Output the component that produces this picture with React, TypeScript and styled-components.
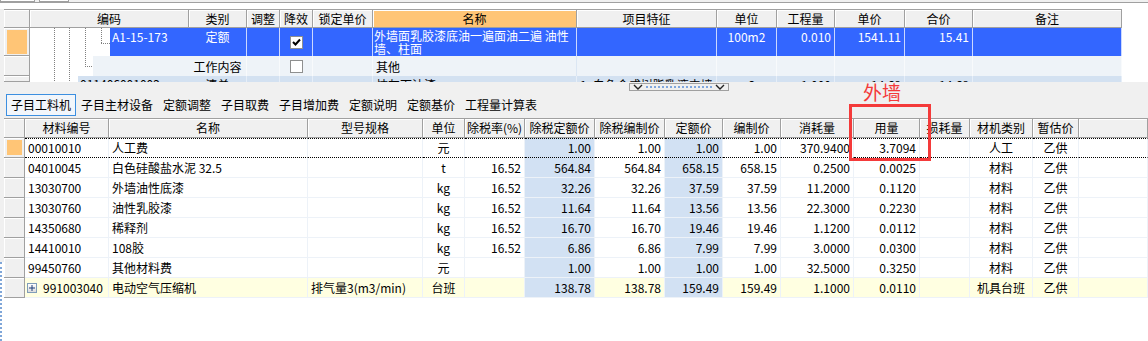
import React from 'react'
import styled, { createGlobalStyle } from 'styled-components'

const FONT = `"Noto Sans CJK SC", "Noto Sans", sans-serif`

const GlobalStyle = createGlobalStyle`
  html, body { margin: 0; padding: 0; background: #fff; }
  body { font-family: ${FONT}; font-size: 12px; color: #000; }
`

type Align = 'left' | 'center' | 'right'
const justify = (a?: Align) => (a === 'right' ? 'flex-end' : a === 'center' ? 'center' : 'flex-start')

// 上表列宽: 行头 编码 类别 调整 降效 锁定单价 名称 项目特征 单位 工程量 单价 合价 备注
const topCols = '26px 159px 58px 33px 33px 60px 204px 140px 60px 58px 70px 68px 149px'
// 下表列宽
const bottomCols = '21px 84px 199px 115px 42px 60px 70px 70px 58px 58px 73px 66px 50px 63px 46px 1fr'

const SEL = '#3366ff'
const ORANGE = '#ffc576'
const LIGHT_BLUE = '#d2e1f3'
const YELLOW = '#ffffe1'

const Screen = styled.div`
  position: relative;
  width: 1148px;
  height: 341px;
  overflow: hidden;
  display: flex;
  flex-direction: column;
  background: #f0f0f0;
`

const TopStrip = styled.div`
  height: 3px;
  box-sizing: border-box;
  border-bottom: 1px solid #a0a0a0;
  display: flex;
  gap: 4px;
`

const StripButton = styled.div<{ $w: number }>`
  width: ${p => p.$w}px;
  height: 2px;
  box-sizing: border-box;
  background: #fff;
  border: 1px solid #a0a0a0;
  border-top: none;
`

const TopPanel = styled.div`
  height: 79px;
  box-sizing: border-box;
  padding-top: 6px;
  background: #fff;
  display: flex;
  overflow: hidden;
`

const Gutter = styled.div`
  width: 4px;
  flex: none;
  background: #f0f0f0;
`

const TopGrid = styled.div`
  width: 1118px;
  border-top: 1px solid #a0a0a0;
  display: flex;
  flex-direction: column;
`

const TopRow = styled.div<{ $h: number }>`
  display: grid;
  grid-template-columns: ${topCols};
  height: ${p => p.$h}px;
  flex: none;
  overflow: hidden;
`

const HeadCell = styled.div<{ $hl?: boolean }>`
  box-sizing: border-box;
  background: ${p => (p.$hl ? ORANGE : '#f0f0f0')};
  border-right: 1px solid #a0a0a0;
  border-bottom: 1px solid #a0a0a0;
  box-shadow: inset 1px 1px 0 #fff;
  display: flex;
  align-items: center;
  justify-content: center;
  white-space: nowrap;
  overflow: hidden;
  line-height: 14px;
`

const Indicator = styled.div<{ $pad: string }>`
  box-sizing: border-box;
  background: #f0f0f0;
  border-right: 1px solid #a0a0a0;
  border-bottom: 1px solid #a0a0a0;
  box-shadow: inset 1px 1px 0 #fff;
  padding: ${p => p.$pad};
  display: flex;
`

const Mark = styled.div`
  flex: 1;
  background: ${ORANGE};
`

const TopCell = styled.div<{ $bg: string; $line: string; $color?: string; $align?: Align; $top?: boolean; $wrap?: boolean }>`
  box-sizing: border-box;
  background: ${p => p.$bg};
  color: ${p => p.$color || '#000'};
  border-right: 1px solid ${p => p.$line};
  padding: ${p => (p.$wrap ? '1px 1px 0' : p.$top ? '2px 3px 0' : '0 3px')};
  display: flex;
  align-items: ${p => (p.$top || p.$wrap ? 'flex-start' : 'center')};
  justify-content: ${p => justify(p.$align)};
  line-height: 13px;
  white-space: ${p => (p.$wrap ? 'normal' : 'nowrap')};
  overflow: hidden;
`

const CodeCell = styled.div`
  display: flex;
  background: #fff;
  overflow: hidden;
`

const CodeBody = styled.div<{ $bg: string; $color?: string; $top?: boolean }>`
  flex: 1;
  background: ${p => p.$bg};
  color: ${p => p.$color || '#000'};
  padding: ${p => (p.$top ? '2px 2px 0' : '1px 2px 0')};
  line-height: 13px;
  white-space: nowrap;
  overflow: hidden;
`

const CheckBox = styled.div`
  width: 13px;
  height: 13px;
  box-sizing: border-box;
  border: 1px solid #8e8f8f;
  background: #fff;
  display: flex;
  align-items: center;
  justify-content: center;
`

const Middle = styled.div`
  height: 36px;
  flex: none;
  display: flex;
  flex-direction: column;
`

const SplitRow = styled.div`
  margin-top: 1px;
  height: 8px;
  padding-left: 629px;
  display: flex;
`

const Splitter = styled.div`
  width: 100px;
  height: 8px;
  box-sizing: border-box;
  border: 1px solid #a0a0a0;
  background: #f0f0f0;
  display: flex;
  align-items: center;
`

const TabBar = styled.div`
  margin-top: 3px;
  height: 22px;
  padding-left: 6px;
  display: flex;
  font-size: 12px;
`

const Tab = styled.div<{ $active?: boolean }>`
  height: 22px;
  box-sizing: border-box;
  padding: 0 4px;
  line-height: 20px;
  border: 1px solid ${p => (p.$active ? '#3c8fe0' : 'transparent')};
  background: ${p => (p.$active ? '#f2f6fb' : 'transparent')};
  white-space: nowrap;
`

const BottomPanel = styled.div`
  flex: 1;
  display: flex;
  background: #fff;
`

const SideGutter = styled.div`
  width: 4px;
  flex: none;
  display: flex;
  flex-direction: column;
`

const SideTop = styled.div`
  height: 144px;
  background: #f0f0f0;
`

const SideBottom = styled.div`
  flex: 1;
  border-left: 2px dotted #7fa6d8;
`

const BottomGrid = styled.div`
  flex: 1;
  border-top: 1px solid #a0a0a0;
  display: flex;
  flex-direction: column;
`

const BottomRow = styled.div<{ $h: number }>`
  display: grid;
  grid-template-columns: ${bottomCols};
  height: ${p => p.$h}px;
`

const BodyCell = styled.div<{ $bg: string; $align?: Align; $focus?: boolean }>`
  box-sizing: border-box;
  background: ${p => p.$bg};
  border-right: 1px solid #edf2f8;
  border-top: ${p => (p.$focus ? '1px dotted #000' : 'none')};
  border-bottom: ${p => (p.$focus ? '1px dotted #000' : '1px solid #edf2f8')};
  padding: 0 3px;
  display: flex;
  align-items: center;
  justify-content: ${p => justify(p.$align)};
  white-space: nowrap;
  overflow: hidden;
  line-height: 14px;
`

const ExpandBox = styled.div`
  width: 10px;
  height: 10px;
  box-sizing: border-box;
  border: 1px solid #7f9db9;
  background: linear-gradient(#fff, #dcdcdc);
  margin: 0 6px 0 -1px;
  display: flex;
  align-items: center;
  justify-content: center;
  flex: none;
`

const NoteLabel = styled.div`
  position: absolute;
  left: 863px;
  top: 82px;
  font-size: 19px;
  line-height: 20px;
  color: #f43a3a;
`

const NoteBox = styled.div`
  position: absolute;
  left: 849px;
  top: 104px;
  width: 82px;
  height: 57px;
  box-sizing: border-box;
  border: 3px solid #f43a3a;
`

const TreeGuide = ({ width, height, branch }: { width: number; height: number; branch?: 'leaf' | 'row' }) => (
  <svg width={width} height={height} style={{ flex: 'none', display: 'block' }}>
    <g stroke="#808080" strokeDasharray="1 1" strokeWidth={1}>
      <line x1={24.5} y1={0} x2={24.5} y2={height} />
      <line x1={39.5} y1={0} x2={39.5} y2={height} />
      {branch === 'leaf' && (
        <>
          <line x1={55.5} y1={0} x2={55.5} y2={height} />
          <line x1={71.5} y1={0} x2={71.5} y2={15} />
          <line x1={71} y1={15.5} x2={80} y2={15.5} />
        </>
      )}
      {branch === 'row' && (
        <>
          <line x1={55.5} y1={0} x2={55.5} y2={10} />
          <line x1={55} y1={10.5} x2={63} y2={10.5} />
        </>
      )}
    </g>
  </svg>
)

const Check = ({ checked }: { checked?: boolean }) => (
  <CheckBox>
    {checked && (
      <svg width={9} height={9} viewBox="0 0 9 9">
        <path d="M1 4 L3.5 6.5 L8 1.5" stroke="#000" strokeWidth={2} fill="none" />
      </svg>
    )}
  </CheckBox>
)

const Chevron = () => (
  <svg width={10} height={6} viewBox="0 0 10 6" style={{ flex: 'none', margin: '0 3px' }}>
    <path d="M1 1 L5 5 L9 1" stroke="#222" strokeWidth={1.4} fill="none" />
  </svg>
)

const topHead = ['', '编码', '类别', '调整', '降效', '锁定单价', '名称', '项目特征', '单位', '工程量', '单价', '合价', '备注']

const bottomHead = ['', '材料编号', '名称', '型号规格', '单位', '除税率(%)', '除税定额价', '除税编制价', '定额价', '编制价', '消耗量', '用量', '损耗量', '材机类别', '暂估价', '']

type Mat = {
  code: string
  name: string
  spec?: string
  unit: string
  rate?: string
  p1: string
  p2: string
  p3: string
  p4: string
  use: string
  qty: string
  kind: string
  est: string
  expand?: boolean
}

const mats: Mat[] = [
  { code: '00010010', name: '人工费', unit: '元', p1: '1.00', p2: '1.00', p3: '1.00', p4: '1.00', use: '370.9400', qty: '3.7094', kind: '人工', est: '乙供' },
  { code: '04010045', name: '白色硅酸盐水泥 32.5', unit: 't', rate: '16.52', p1: '564.84', p2: '564.84', p3: '658.15', p4: '658.15', use: '0.2500', qty: '0.0025', kind: '材料', est: '乙供' },
  { code: '13030700', name: '外墙油性底漆', unit: 'kg', rate: '16.52', p1: '32.26', p2: '32.26', p3: '37.59', p4: '37.59', use: '11.2000', qty: '0.1120', kind: '材料', est: '乙供' },
  { code: '13030760', name: '油性乳胶漆', unit: 'kg', rate: '16.52', p1: '11.64', p2: '11.64', p3: '13.56', p4: '13.56', use: '22.3000', qty: '0.2230', kind: '材料', est: '乙供' },
  { code: '14350680', name: '稀释剂', unit: 'kg', rate: '16.52', p1: '16.70', p2: '16.70', p3: '19.46', p4: '19.46', use: '1.1200', qty: '0.0112', kind: '材料', est: '乙供' },
  { code: '14410010', name: '108胶', unit: 'kg', rate: '16.52', p1: '6.86', p2: '6.86', p3: '7.99', p4: '7.99', use: '3.0000', qty: '0.0300', kind: '材料', est: '乙供' },
  { code: '99450760', name: '其他材料费', unit: '元', p1: '1.00', p2: '1.00', p3: '1.00', p4: '1.00', use: '32.5000', qty: '0.3250', kind: '材料', est: '乙供' },
  { code: '991003040', name: '电动空气压缩机', spec: '排气量3(m3/min)', unit: '台班', p1: '138.78', p2: '138.78', p3: '159.49', p4: '159.49', use: '1.1000', qty: '0.0110', kind: '机具台班', est: '乙供', expand: true },
]

const tabs = ['子目工料机', '子目主材设备', '定额调整', '子目取费', '子目增加费', '定额说明', '定额基价', '工程量计算表']

const MatRow = ({ m, index }: { m: Mat; index: number }) => {
  const focus = index === 0
  const bg = m.expand ? YELLOW : '#fff'
  const cell = (content: React.ReactNode, align: Align = 'left', tint?: boolean) => (
    <BodyCell $bg={tint ? LIGHT_BLUE : bg} $align={align} $focus={focus}>
      {content}
    </BodyCell>
  )
  return (
    <BottomRow $h={20}>
      <Indicator $pad="2px 2px 2px 3px">{focus && <Mark />}</Indicator>
      {cell(
        <>
          {m.expand && (
            <ExpandBox>
              <svg width={6} height={6} viewBox="0 0 6 6">
                <path d="M0 3 H6 M3 0 V6" stroke="#1f3f7a" strokeWidth={1} />
              </svg>
            </ExpandBox>
          )}
          {m.code}
        </>
      )}
      {cell(m.name)}
      {cell(m.spec)}
      {cell(m.unit, 'center')}
      {cell(m.rate, 'right')}
      {cell(m.p1, 'right', true)}
      {cell(m.p2, 'right')}
      {cell(m.p3, 'right', true)}
      {cell(m.p4, 'right')}
      {cell(m.use, 'right')}
      {cell(m.qty, 'right')}
      {cell('')}
      {cell(m.kind, 'center')}
      {cell(m.est, 'center')}
      {cell('')}
    </BottomRow>
  )
}

export default function App() {
  const selLine = 'rgba(255,255,255,0.75)'
  const row2 = '#eef3f8'
  const row3 = '#d3e1f1'
  return (
    <>
      <GlobalStyle />
      <Screen>
        <TopStrip>
          <StripButton $w={35} />
          <StripButton $w={30} />
        </TopStrip>

        <TopPanel>
          <Gutter />
          <TopGrid>
            <TopRow $h={18}>
              {topHead.map((h, i) => (
                <HeadCell key={i} $hl={h === '名称'}>
                  {h}
                </HeadCell>
              ))}
            </TopRow>

            {/* 选中的定额行 */}
            <TopRow $h={28}>
              <Indicator $pad="2px 2px 1px 3px">
                <Mark />
              </Indicator>
              <CodeCell>
                <TreeGuide width={80} height={28} branch="leaf" />
                <CodeBody $bg={SEL} $color="#fff" $top>
                  A1-15-173
                </CodeBody>
              </CodeCell>
              <TopCell $bg={SEL} $line={selLine} $color="#fff" $align="center" $top>
                定额
              </TopCell>
              <TopCell $bg={SEL} $line={selLine} />
              <TopCell $bg={SEL} $line={selLine} $align="center">
                <Check checked />
              </TopCell>
              <TopCell $bg={SEL} $line={selLine} />
              <TopCell $bg={SEL} $line={selLine} $color="#fff" $wrap>
                外墙面乳胶漆底油一遍面油二遍 油性墙、柱面
              </TopCell>
              <TopCell $bg={SEL} $line={selLine} />
              <TopCell $bg={SEL} $line={selLine} $color="#fff" $align="center" $top>
                100m2
              </TopCell>
              <TopCell $bg={SEL} $line={selLine} $color="#fff" $align="right" $top>
                0.010
              </TopCell>
              <TopCell $bg={SEL} $line={selLine} $color="#fff" $align="right" $top>
                1541.11
              </TopCell>
              <TopCell $bg={SEL} $line={selLine} $color="#fff" $align="right" $top>
                15.41
              </TopCell>
              <TopCell $bg={SEL} $line={selLine} />
            </TopRow>

            <TopRow $h={20}>
              <Indicator $pad="0" />
              <CodeCell>
                <TreeGuide width={63} height={20} branch="row" />
                <CodeBody $bg={row2} />
              </CodeCell>
              <TopCell $bg={row2} $line="#f8fafc" $align="center">
                工作内容
              </TopCell>
              <TopCell $bg={row2} $line="#f8fafc" />
              <TopCell $bg={row2} $line="#f8fafc" $align="center">
                <Check />
              </TopCell>
              <TopCell $bg={row2} $line="#f8fafc" />
              <TopCell $bg={row2} $line="#dbe6f3">
                其他
              </TopCell>
              <TopCell $bg={row2} $line="#f8fafc" />
              <TopCell $bg={row2} $line="#f8fafc" />
              <TopCell $bg={row2} $line="#f8fafc" />
              <TopCell $bg={row2} $line="#f8fafc" />
              <TopCell $bg={row2} $line="#f8fafc" />
              <TopCell $bg={row2} $line="#f8fafc" />
            </TopRow>

            {/* 只露出顶部几像素的清单行 */}
            <TopRow $h={6}>
              <Indicator $pad="0" />
              <CodeCell>
                <TreeGuide width={48} height={6} />
                <CodeBody $bg={row3}>011406001002</CodeBody>
              </CodeCell>
              <TopCell $bg={row3} $line="#e6eef8" $align="center" $top>
                清单
              </TopCell>
              <TopCell $bg={row3} $line="#e6eef8" />
              <TopCell $bg={row3} $line="#e6eef8" />
              <TopCell $bg={row3} $line="#e6eef8" />
              <TopCell $bg={row3} $line="#e6eef8" $top>
                抹灰面油漆
              </TopCell>
              <TopCell $bg={row3} $line="#e6eef8" $top>
                1. 白色合成树脂乳液内墙
              </TopCell>
              <TopCell $bg={row3} $line="#e6eef8" $align="center" $top>
                m2
              </TopCell>
              <TopCell $bg={row3} $line="#e6eef8" $align="right" $top>
                1.000
              </TopCell>
              <TopCell $bg={row3} $line="#e6eef8" $align="right" $top>
                14.68
              </TopCell>
              <TopCell $bg={row3} $line="#e6eef8" $align="right" $top>
                14.68
              </TopCell>
              <TopCell $bg={row3} $line="#e6eef8" />
            </TopRow>
          </TopGrid>
        </TopPanel>

        <Middle>
          <SplitRow>
            <Splitter>
              <Chevron />
              <svg width={66} height={2} style={{ flex: 1 }}>
                <line x1={0} y1={1} x2={66} y2={1} stroke="#5b8ed6" strokeDasharray="2 2" strokeWidth={1.5} />
              </svg>
              <Chevron />
            </Splitter>
          </SplitRow>
          <TabBar>
            {tabs.map((t, i) => (
              <Tab key={t} $active={i === 0}>
                {t}
              </Tab>
            ))}
          </TabBar>
        </Middle>

        <BottomPanel>
          <SideGutter>
            <SideTop />
            <SideBottom />
          </SideGutter>
          <BottomGrid>
            <BottomRow $h={19}>
              {bottomHead.map((h, i) => (
                <HeadCell key={i}>{h}</HeadCell>
              ))}
            </BottomRow>
            {mats.map((m, i) => (
              <MatRow key={m.code} m={m} index={i} />
            ))}
          </BottomGrid>
        </BottomPanel>

        <NoteLabel>外墙</NoteLabel>
        <NoteBox />
      </Screen>
    </>
  )
}
